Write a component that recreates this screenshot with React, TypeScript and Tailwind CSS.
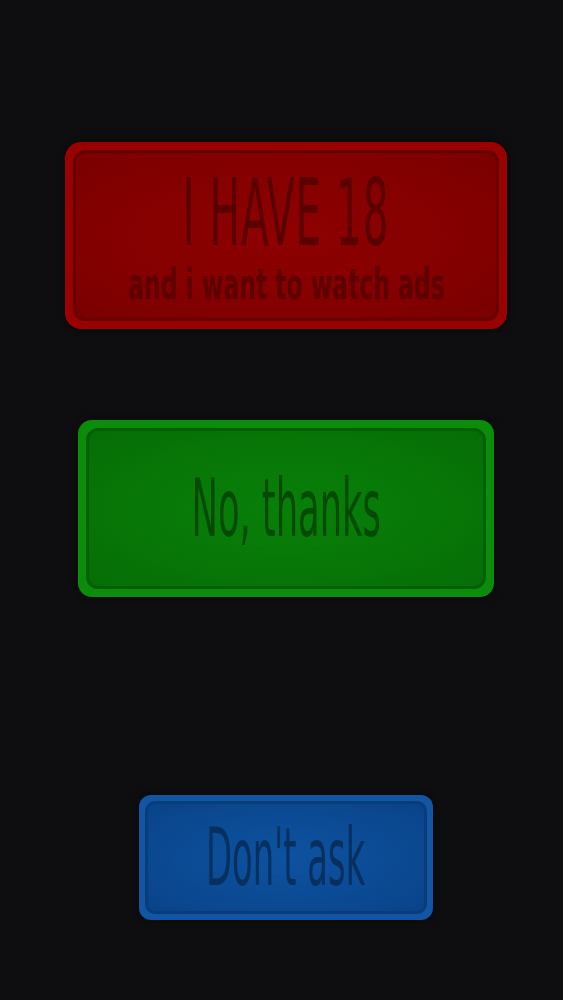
export default function App() {
    const font = { fontFamily: '"DejaVu Sans Condensed", "DejaVu Sans", sans-serif' };

    return (
        <div className="min-h-screen bg-[#0e0e10] flex flex-col items-center pt-[142px] pl-[9px]" style={font}>
            <button className="w-[442px] h-[187px] rounded-[16px] bg-[#9a0202] p-[8px] shadow-[0_0_6px_rgba(0,0,0,0.6)]">
                <div className="h-full w-full rounded-[12px] border-[3px] border-[#660000] bg-[radial-gradient(ellipse_at_center,#8e0101_0%,#840000_60%,#7a0000_100%)] flex flex-col items-center pt-[13px]">
                    <span className="block h-[96px] text-[92px] leading-[96px] text-[#5a0000] scale-x-[0.49] tracking-[2px] whitespace-nowrap">
                        I HAVE 18
                    </span>
                    <span className="block mt-[1px] h-[44px] text-[42px] leading-[44px] text-[#5e0000] font-bold scale-x-[0.62] whitespace-nowrap">
                        and i want to watch ads
                    </span>
                </div>
            </button>

            <button className="mt-[91px] w-[416px] h-[177px] rounded-[14px] bg-[#0b8d0b] p-[8px] shadow-[0_0_6px_rgba(0,0,0,0.6)]">
                <div className="h-full w-full rounded-[12px] border-[3px] border-[#056005] bg-[radial-gradient(ellipse_at_center,#088008_0%,#077607_60%,#066d06_100%)] flex items-center justify-center">
                    <span className="block text-[80px] leading-none text-[#044a04] scale-x-[0.49] whitespace-nowrap">
                        No, thanks
                    </span>
                </div>
            </button>

            <button className="mt-[198px] w-[294px] h-[125px] rounded-[12px] bg-[#1255a5] p-[6px] shadow-[0_0_6px_rgba(0,0,0,0.6)]">
                <div className="h-full w-full rounded-[10px] border-[3px] border-[#0a3c7a] bg-[radial-gradient(ellipse_at_center,#0d52a0_0%,#0b4a93_60%,#094388_100%)] flex items-center justify-center">
                    <span className="block text-[80px] leading-none text-[#07305f] scale-x-[0.47] whitespace-nowrap">
                        Don't ask
                    </span>
                </div>
            </button>
        </div>
    );
}
